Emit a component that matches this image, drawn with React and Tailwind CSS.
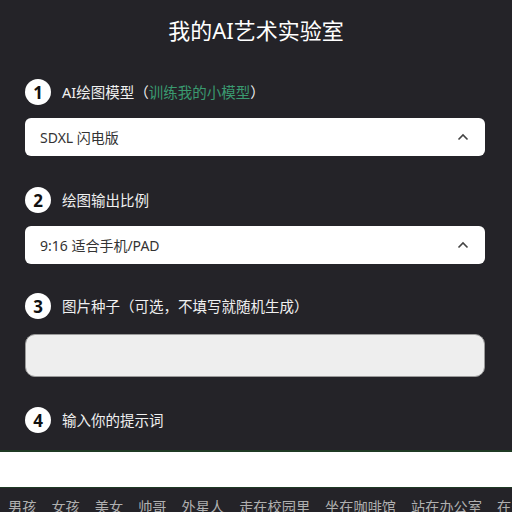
import React from "react";

const FONT = { fontFamily: '"Noto Sans", "Noto Sans CJK SC", sans-serif' };

function Step({ n, children }) {
  return (
    <div className="flex items-center h-[26px] gap-[11px]">
      <div className="w-[26px] h-[26px] rounded-full bg-white text-[#111] font-bold text-[17px] flex items-center justify-center leading-none">
        {n}
      </div>
      <div className="text-[14.5px] text-[#f0f0f0] leading-none">{children}</div>
    </div>
  );
}

function Select({ text }) {
  return (
    <div className="h-[38px] rounded-[6px] bg-white flex items-center justify-between pl-[15px] pr-[16px]">
      <span className="text-[14px] text-[#333]">{text}</span>
      <svg width="12" height="8" viewBox="0 0 12 8">
        <polyline points="1.5,6.5 6,2 10.5,6.5" fill="none" stroke="#444" strokeWidth="1.6" />
      </svg>
    </div>
  );
}

export default function App() {
  const tags = ["男孩", "女孩", "美女", "帅哥", "外星人", "走在校园里", "坐在咖啡馆", "站在办公室", "在公园里"];
  return (
    <div className="w-[512px] h-[512px] overflow-hidden bg-[#242328]" style={FONT}>
      <h1 className="text-center text-[22px] text-white pt-[15px] leading-[30px]">我的AI艺术实验室</h1>
      <div className="pl-[25px] pr-[27px]">
        <div className="mt-[34px]">
          <Step n="1">
            AI绘图模型（<span className="text-[#3a9a70]">训练我的小模型</span>）
          </Step>
        </div>
        <div className="mt-[13px]">
          <Select text="SDXL 闪电版" />
        </div>
        <div className="mt-[31px]">
          <Step n="2">绘图输出比例</Step>
        </div>
        <div className="mt-[13px]">
          <Select text="9:16 适合手机/PAD" />
        </div>
        <div className="mt-[29px]">
          <Step n="3">图片种子（可选，不填写就随机生成）</Step>
        </div>
        <div className="mt-[15px] h-[43px] rounded-[10px] bg-[#eeeeee] border border-[#9a9a9a]" />
        <div className="mt-[30px]">
          <Step n="4">输入你的提示词</Step>
        </div>
      </div>
      <div className="mt-[17px] h-[38px] bg-white border-t-2 border-b border-[#1f3a24]" />
      <div className="mt-[9px] flex gap-[15px] pl-[8px] whitespace-nowrap text-[14.2px] leading-[20px] text-[#b0b0b0]">
        {tags.map((t) => (
          <span key={t}>{t}</span>
        ))}
      </div>
    </div>
  );
}
